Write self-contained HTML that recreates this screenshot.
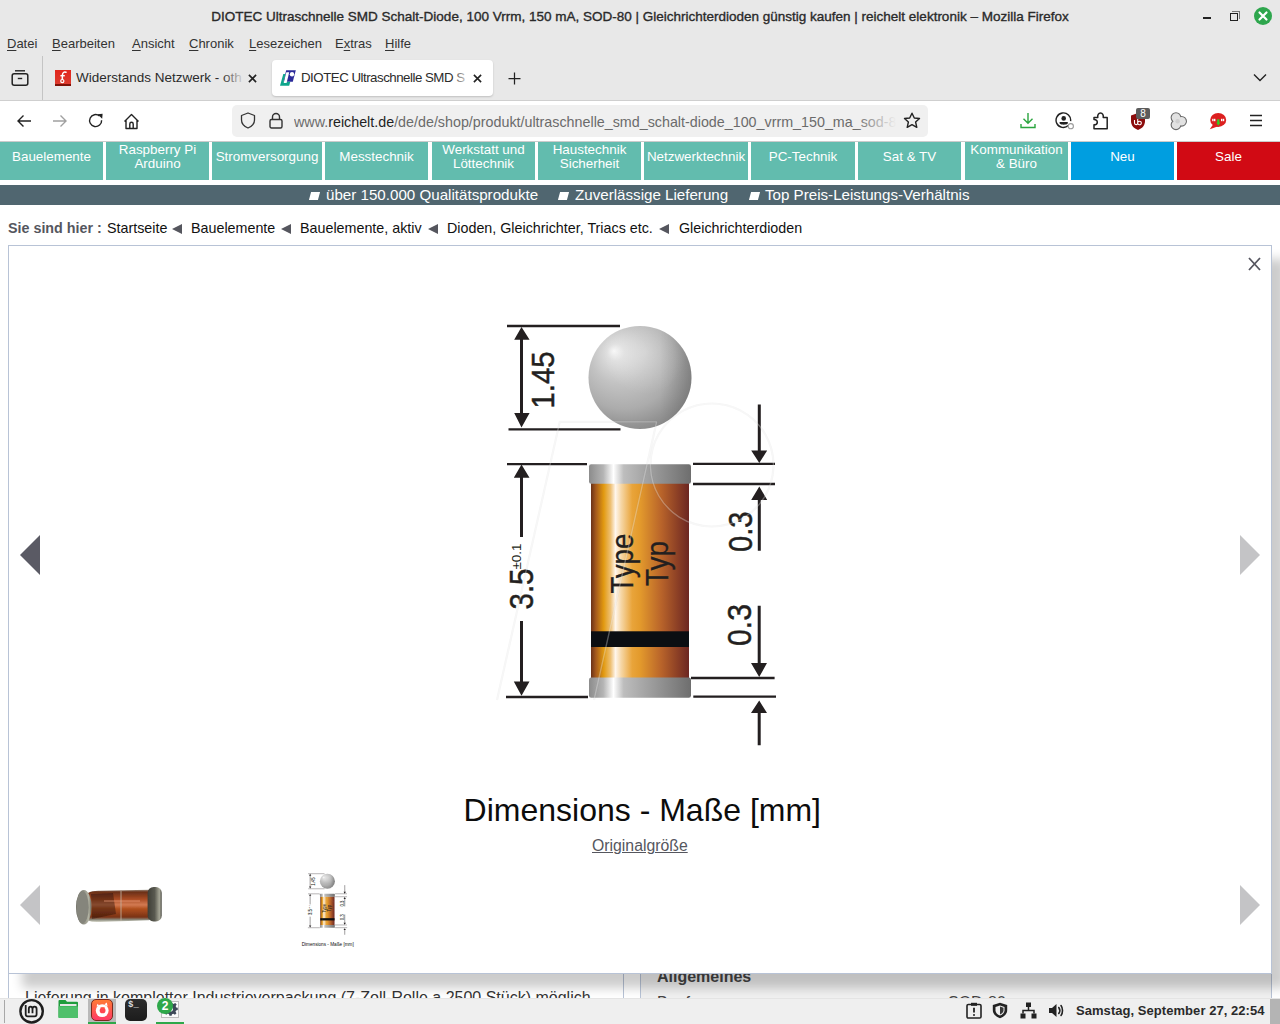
<!DOCTYPE html>
<html><head><meta charset="utf-8">
<style>
*{margin:0;padding:0;box-sizing:border-box}
html,body{width:1280px;height:1024px;overflow:hidden;background:#fff;font-family:"Liberation Sans",sans-serif}
.abs{position:absolute}
#chrome{position:absolute;left:0;top:0;width:1280px;height:141px;background:#e8e8e8}
#title{position:absolute;left:0;top:0;width:1280px;height:32px;text-align:center;font-size:13.5px;line-height:33px;color:#2a2a2a;font-weight:normal;-webkit-text-stroke:0.35px #2a2a2a}
#menu{position:absolute;left:0;top:32px;height:24px;font-size:13px;color:#333}
#menu span{position:absolute;top:4px;white-space:nowrap;line-height:16px}
#menu span u{text-decoration:underline;text-decoration-thickness:1px;text-underline-offset:1.5px}
.tabtxt{font-size:13.3px;color:#2b2b2b;white-space:nowrap;overflow:hidden;line-height:16px}
#navbar{position:absolute;left:0;top:100px;width:1280px;height:41px;background:#fff;border-top:1px solid #cfcfcf}
#page{position:absolute;left:0;top:0;width:1280px;height:1024px;clip-path:inset(141px 0 26px 0)}
.cat{position:absolute;top:142px;height:38px;background:#62bcae;color:#fff;font-size:13.4px;text-align:center;line-height:14px}
.cat span{position:absolute;left:0;right:0;top:8px;white-space:nowrap}
.cat.two span{top:1px}
#usp{position:absolute;left:0;top:185px;width:1280px;height:20px;background:#506670;color:#fff;font-size:15.15px}
#usp span{position:absolute;top:1px;line-height:18px;white-space:nowrap}
#usp .sq{position:absolute;top:7px;width:9px;height:8px;background:#fff;transform:skewX(-15deg)}
#crumbs{position:absolute;left:0;top:219px;font-size:14.3px;color:#111;line-height:18px}
#crumbs span,#crumbs b{position:absolute;top:0;white-space:nowrap}
#crumbs b{color:#55565e}
#crumbs .tri{position:absolute;top:5px;width:0;height:0;border-top:5px solid transparent;border-bottom:5px solid transparent;border-right:10px solid #55565e}
#modal{position:absolute;left:8px;top:245px;width:1264px;height:729px;background:#fff;border:1px solid #b8c3d6}
.arrow-l,.arrow-r{position:absolute;width:0;height:0;border-top:20px solid transparent;border-bottom:20px solid transparent}
.arrow-l{border-right:20px solid #c4c4c6}
.arrow-r{border-left:20px solid #c4c4c6}
#taskbar{position:absolute;left:0;top:998px;width:1280px;height:26px;background:#efefef;box-shadow:inset 0 1px 0 #e4e4e4}
</style></head><body>
<div id="page">
  <div class="cat" style="left:0;width:103px"><span>Bauelemente</span></div>
  <div class="cat two" style="left:106px;width:103px"><span>Raspberry Pi<br>Arduino</span></div>
  <div class="cat" style="left:212px;width:110px"><span>Stromversorgung</span></div>
  <div class="cat" style="left:325px;width:103px"><span>Messtechnik</span></div>
  <div class="cat two" style="left:432px;width:103px"><span>Werkstatt und<br>Löttechnik</span></div>
  <div class="cat two" style="left:538px;width:103px"><span>Haustechnik<br>Sicherheit</span></div>
  <div class="cat" style="left:644px;width:104px"><span>Netzwerktechnik</span></div>
  <div class="cat" style="left:751px;width:104px"><span>PC-Technik</span></div>
  <div class="cat" style="left:858px;width:103px"><span>Sat &amp; TV</span></div>
  <div class="cat two" style="left:965px;width:103px"><span>Kommunikation<br>&amp; Büro</span></div>
  <div class="cat" style="left:1071px;width:103px;background:#009ee0"><span>Neu</span></div>
  <div class="cat" style="left:1177px;width:103px;background:#d10a14"><span>Sale</span></div>
  <div id="usp">
    <i class="sq" style="left:310px"></i><span style="left:326px">über 150.000 Qualitätsprodukte</span>
    <i class="sq" style="left:559px"></i><span style="left:575px">Zuverlässige Lieferung</span>
    <i class="sq" style="left:750px"></i><span style="left:765px">Top Preis-Leistungs-Verhältnis</span>
  </div>
  <div id="crumbs">
    <b style="left:8px">Sie sind hier :</b>
    <span style="left:107px">Startseite</span><i class="tri" style="left:172px"></i>
    <span style="left:191px">Bauelemente</span><i class="tri" style="left:281px"></i>
    <span style="left:300px">Bauelemente, aktiv</span><i class="tri" style="left:428px"></i>
    <span style="left:447px">Dioden, Gleichrichter, Triacs etc.</span><i class="tri" style="left:659px"></i>
    <span style="left:679px">Gleichrichterdioden</span>
  </div>
  <!-- content under modal -->
  <div class="abs" style="left:8px;top:900px;width:616px;height:100px;border-left:1px solid #b8c3d6;border-right:1px solid #b8c3d6"></div>
  <div class="abs" style="left:640px;top:900px;width:632px;height:100px;border-left:1px solid #b8c3d6;border-right:1px solid #b8c3d6;background:#f0f0f0"></div>
  <div class="abs" style="left:25px;top:989px;font-size:16px;color:#333;white-space:nowrap;line-height:18px">Lieferung in kompletter Industrieverpackung (7-Zoll-Rolle a 2500 Stück) möglich</div>
  <div class="abs" style="left:657px;top:967.5px;font-size:16px;font-weight:bold;color:#444;white-space:nowrap;line-height:18px">Allgemeines</div>
  <div class="abs" style="left:657px;top:994px;font-size:16px;color:#444;white-space:nowrap;line-height:18px">Bauform</div>
  <div class="abs" style="left:948px;top:994px;font-size:16px;color:#444;white-space:nowrap;line-height:18px">SOD-80</div>
  <!-- modal shadow -->
  <div class="abs" style="left:8px;top:245px;width:1264px;height:729px;box-shadow:14px 14px 10px rgba(0,0,0,0.2)"></div>
  <div id="modal">
    <svg class="abs" style="left:1239px;top:11px" width="13" height="14" viewBox="0 0 13 14"><path d="M1 1 L12 13 M12 1 L1 13" stroke="#55555f" stroke-width="1.8"/></svg>
    <div class="arrow-l" style="left:11px;top:289px;border-right-color:#5a5a64"></div>
    <div class="arrow-r" style="left:1231px;top:289px"></div>
    <div class="arrow-l" style="left:11px;top:639px"></div>
    <div class="arrow-r" style="left:1231px;top:639px"></div>
    <div class="abs" style="left:583px;top:591px;font-size:15.8px;color:#55565e;text-decoration:underline;white-space:nowrap;line-height:18px">Originalgröße</div>
  </div>
</div>
<svg class="abs" style="left:0;top:0;clip-path:inset(246px 9px 51px 9px)" width="1280" height="1024" viewBox="0 0 1280 1024">
<defs>
  <radialGradient id="gSph" cx="628" cy="362" r="72" fx="614" fy="351" gradientUnits="userSpaceOnUse">
    <stop offset="0" stop-color="#f7f7f7"/>
    <stop offset="0.12" stop-color="#dedede"/>
    <stop offset="0.4" stop-color="#c2c2c2"/>
    <stop offset="0.7" stop-color="#acacac"/>
    <stop offset="0.9" stop-color="#939393"/>
    <stop offset="1" stop-color="#888888"/>
  </radialGradient>
  <radialGradient id="gSph2" cx="645" cy="352" r="42" gradientUnits="userSpaceOnUse">
    <stop offset="0" stop-color="#fff" stop-opacity="0.28"/>
    <stop offset="1" stop-color="#fff" stop-opacity="0"/>
  </radialGradient>
  <linearGradient id="gSph3" x1="660" y1="0" x2="692" y2="0" gradientUnits="userSpaceOnUse">
    <stop offset="0" stop-color="#000" stop-opacity="0"/>
    <stop offset="1" stop-color="#000" stop-opacity="0.12"/>
  </linearGradient>
  <linearGradient id="gBody" x1="591" x2="689" y1="0" y2="0" gradientUnits="userSpaceOnUse">
    <stop offset="0" stop-color="#6a3218"/>
    <stop offset="0.05" stop-color="#a55a1c"/>
    <stop offset="0.13" stop-color="#e29a10"/>
    <stop offset="0.2" stop-color="#eec074"/>
    <stop offset="0.25" stop-color="#fff6ec"/>
    <stop offset="0.31" stop-color="#f6d6a4"/>
    <stop offset="0.42" stop-color="#e9a43a"/>
    <stop offset="0.5" stop-color="#e39a2c"/>
    <stop offset="0.72" stop-color="#b8632a"/>
    <stop offset="1" stop-color="#6c2622"/>
  </linearGradient>
  <linearGradient id="gCap" x1="589" x2="691" y1="0" y2="0" gradientUnits="userSpaceOnUse">
    <stop offset="0" stop-color="#8c8c8c"/>
    <stop offset="0.14" stop-color="#b4b4b4"/>
    <stop offset="0.24" stop-color="#ffffff"/>
    <stop offset="0.34" stop-color="#bdbdbd"/>
    <stop offset="0.6" stop-color="#9e9e9e"/>
    <stop offset="1" stop-color="#6e6e6e"/>
  </linearGradient>
</defs>
<g id="drw" fill="#231f20" stroke="none" font-family="Liberation Sans, sans-serif">
  <!-- sphere dims -->
  <path d="M507 326 H620 M508.5 429.4 H620.5 M507 464.2 H587 M506 697 H588 M693 463.8 H775 M693 484 H775 M691 678 H774.6 M693.3 696.6 H776" stroke="#231f20" stroke-width="2.3" fill="none"/>
  <path d="M521.5 338 V415 M521.5 476 V537 M521.5 621 V683 M759.3 404.4 V452 M759.3 499 V550.8 M759.2 605.8 V664 M759.2 712 V745.2" stroke="#231f20" stroke-width="3" fill="none"/>
  <path d="M521.5 327 L514.2 339.8 H529.6 Z M521.5 427.5 L514.2 413 H529.6 Z M521.5 464.5 L513.8 477.8 H529.5 Z M521.5 695.8 L513.8 681.6 H529.5 Z M759.3 463 L751.2 450.4 H767.2 Z M759.3 486.5 L751.2 500 H767.2 Z M759.2 677 L751 663 H767 Z M759.2 700.4 L751 713 H767 Z"/>
  <text transform="translate(553.8,408.5) rotate(-90)" font-size="32" textLength="57" lengthAdjust="spacingAndGlyphs" stroke="#231f20" stroke-width="0.5">1.45</text>
  <text transform="translate(532.6,609.5) rotate(-90)" font-size="33" textLength="41" lengthAdjust="spacingAndGlyphs" stroke="#231f20" stroke-width="0.5">3.5</text>
  <text transform="translate(521,569.5) rotate(-90)" font-size="13.5" textLength="26" lengthAdjust="spacingAndGlyphs">±0.1</text>
  <text transform="translate(751.8,552) rotate(-90)" font-size="34" textLength="40.5" lengthAdjust="spacingAndGlyphs" stroke="#231f20" stroke-width="0.5">0.3</text>
  <text transform="translate(751.2,646) rotate(-90)" font-size="34" textLength="42" lengthAdjust="spacingAndGlyphs" stroke="#231f20" stroke-width="0.5">0.3</text>
  <!-- sphere -->
  <circle cx="640" cy="377.4" r="51.5" fill="url(#gSph)"/><circle cx="640" cy="377.4" r="51.5" fill="url(#gSph2)"/><circle cx="640" cy="377.4" r="51.5" fill="url(#gSph3)"/>
  <!-- cylinder -->
  <rect x="591" y="482" width="98" height="197" fill="url(#gBody)"/>
  <rect x="591" y="631.3" width="98" height="15.7" fill="#0b0e12"/>
  <rect x="589" y="464.3" width="102" height="19.4" rx="2.2" fill="url(#gCap)"/>
  <rect x="589" y="677.6" width="102" height="20.2" rx="2.2" fill="url(#gCap)"/>
  <text transform="translate(633,593.6) rotate(-90)" font-size="31.5" textLength="60" lengthAdjust="spacingAndGlyphs" stroke="#231f20" stroke-width="0.3">Type</text>
  <text transform="translate(667.8,586) rotate(-90)" font-size="31.5" textLength="45" lengthAdjust="spacingAndGlyphs" stroke="#231f20" stroke-width="0.3">Typ</text>
  <g fill="none" stroke-linejoin="round">
    <path d="M497 700 L559.7 421.9 H656.6 L594 700 M712 403.5 A61.5 61.5 0 1 1 711.9 403.5" stroke="#000" stroke-opacity="0.045" stroke-width="2.2"/>
    <path d="M497 700 L559.7 421.9 H656.6 L594 700 M712 403.5 A61.5 61.5 0 1 1 711.9 403.5" stroke="#fff" stroke-opacity="0.3" stroke-width="1.4"/>
  </g>
  <text x="463.6" y="820.8" font-size="30.5" textLength="357.4" lengthAdjust="spacingAndGlyphs" fill="#0c0c0c">Dimensions - Maße [mm]</text>
</g>
<use href="#drw" transform="translate(234.2,826.25) scale(0.1456)"/>
</svg>
<svg class="abs" style="left:70px;top:880px" width="100" height="50" viewBox="70 880 100 50">
<defs>
  <linearGradient id="pBody" x1="0" y1="889" x2="0" y2="922" gradientUnits="userSpaceOnUse">
    <stop offset="0" stop-color="#a8a89a"/>
    <stop offset="0.09" stop-color="#6a3018"/>
    <stop offset="0.3" stop-color="#a84a22"/>
    <stop offset="0.48" stop-color="#d27a52"/>
    <stop offset="0.6" stop-color="#b0501e"/>
    <stop offset="0.85" stop-color="#7a3216"/>
    <stop offset="0.93" stop-color="#8a8a7c"/>
    <stop offset="1" stop-color="#d8d8cc"/>
  </linearGradient>
  <linearGradient id="pCapL" x1="76" y1="0" x2="92" y2="0" gradientUnits="userSpaceOnUse">
    <stop offset="0" stop-color="#66665c"/>
    <stop offset="0.45" stop-color="#8e8e84"/>
    <stop offset="0.8" stop-color="#b4b4a4"/>
    <stop offset="1" stop-color="#5a5a50"/>
  </linearGradient>
  <linearGradient id="pCapR" x1="147.5" y1="0" x2="162" y2="0" gradientUnits="userSpaceOnUse">
    <stop offset="0" stop-color="#3e3e36"/>
    <stop offset="0.5" stop-color="#5a5a50"/>
    <stop offset="0.82" stop-color="#a6a696"/>
    <stop offset="1" stop-color="#4e4e46"/>
  </linearGradient>
  <filter id="pBlur" x="-10%" y="-10%" width="120%" height="120%"><feGaussianBlur stdDeviation="0.7"/></filter>
</defs>
<g filter="url(#pBlur)">
  <path d="M88 893 Q92 890.5 100 890.8 L149 889.8 V920.2 L100 922 Q92 922.5 88 920.5 Z" fill="url(#pBody)"/>
  <path d="M91 894 L113 893 L116 914 L92 919 Z" fill="#2a1208" opacity="0.45"/>
  <path d="M121 891 V921" stroke="#c0b0a0" stroke-width="1.4" opacity="0.6"/>
  <path d="M104 901 H140" stroke="#f0a080" stroke-width="1.4" opacity="0.45"/>
  <rect x="147.6" y="887" width="14.2" height="34.6" rx="6" fill="url(#pCapR)"/>
  <ellipse cx="83.8" cy="907.3" rx="7.8" ry="17.3" fill="url(#pCapL)"/>
  <ellipse cx="82.6" cy="907.3" rx="6.2" ry="16" fill="#85857b"/>
</g>
</svg>
<div id="chrome">
  <div id="title">DIOTEC Ultraschnelle SMD Schalt-Diode, 100 Vrrm, 150 mA, SOD-80 | Gleichrichterdioden günstig kaufen | reichelt elektronik – Mozilla Firefox</div>
  <!-- window controls -->
  <div class="abs" style="left:1203px;top:17px;width:8px;height:2px;background:#222"></div>
  <div class="abs" style="left:1232px;top:11px;width:8px;height:8px;border-top:1px solid #777;border-right:1px solid #777"></div>
  <div class="abs" style="left:1230px;top:13px;width:8px;height:8px;border:1.5px solid #222;background:#e8e8e8"></div>
  <div class="abs" style="left:1254px;top:7px;width:18px;height:18px;border-radius:50%;background:#2ea64d"></div>
  <svg class="abs" style="left:1254px;top:7px" width="18" height="18"><path d="M5.5 5.5 L12.5 12.5 M12.5 5.5 L5.5 12.5" stroke="#fff" stroke-width="2.2" stroke-linecap="round"/></svg>
  <div id="menu">
    <span style="left:7px"><u>D</u>atei</span>
    <span style="left:52px"><u>B</u>earbeiten</span>
    <span style="left:132px"><u>A</u>nsicht</span>
    <span style="left:189px"><u>C</u>hronik</span>
    <span style="left:249px"><u>L</u>esezeichen</span>
    <span style="left:335px">E<u>x</u>tras</span>
    <span style="left:385px"><u>H</u>ilfe</span>
  </div>
  <!-- tab bar -->
  <svg class="abs" style="left:11px;top:69px" width="18" height="18" viewBox="0 0 18 18"><path d="M4 1.8 H14" stroke="#222" stroke-width="1.4" fill="none"/><rect x="1.2" y="4.8" width="15.6" height="11.5" rx="2" stroke="#222" stroke-width="1.5" fill="none"/><path d="M6.8 9.5 H11.2" stroke="#222" stroke-width="1.4"/></svg>
  <div class="abs" style="left:42px;top:56px;width:1px;height:44px;background:#c4c4c4"></div>
  <div class="abs" style="left:55px;top:70px;width:16px;height:16px;background:linear-gradient(#e2261c,#dc3a2e 85%,#7e1208 88%)"></div><svg class="abs" style="left:55px;top:70px" width="16" height="16" viewBox="0 0 16 16"><path d="M11 2.3 C9 1.6 7.6 2.6 7.4 5 L7.3 10" stroke="#fff" stroke-width="1.5" fill="none" stroke-linecap="round"/><path d="M5.4 5.7 H9.8" stroke="#fff" stroke-width="1.4"/><circle cx="7.3" cy="11.1" r="1.6" fill="#d84030" stroke="#fff" stroke-width="1.2"/></svg>
  <div class="abs tabtxt" style="left:76px;top:70px;width:170px;font-size:13.5px">Widerstands Netzwerk - oth</div>
  <div class="abs" style="left:222px;top:66px;width:24px;height:24px;background:linear-gradient(90deg,rgba(232,232,232,0),#e8e8e8 95%)"></div>
  <svg class="abs" style="left:248px;top:74px" width="9" height="9"><path d="M0.9 0.9 L8.1 8.1 M8.1 0.9 L0.9 8.1" stroke="#222" stroke-width="1.6"/></svg>
  <div class="abs" style="left:272px;top:60px;width:221px;height:36px;background:#fff;border-radius:4px;box-shadow:0 1px 2px rgba(0,0,0,0.18)"></div>
  <svg class="abs" style="left:280px;top:70px" width="16" height="16" viewBox="0 0 16 16"><path d="M6.2 0.2 H15.8 L12.8 11.8 H3.2 Z" fill="#2c2a9a"/><path d="M3.3 4 H5.6 L3.4 11.8 H10.3 L9.2 15.7 H0 Z" fill="#0fa58c"/><path d="M6.3 2.3 H9.2 L6.6 12.9 H3.7 Z" fill="#fff"/><circle cx="12" cy="4.3" r="2.2" fill="#fff"/></svg>
  <div class="abs tabtxt" style="left:301px;top:70px;width:169px;letter-spacing:-0.5px">DIOTEC Ultraschnelle SMD S</div>
  <div class="abs" style="left:452px;top:66px;width:19px;height:24px;background:linear-gradient(90deg,rgba(255,255,255,0),#fff 95%)"></div>
  <svg class="abs" style="left:473px;top:74px" width="9" height="9"><path d="M0.9 0.9 L8.1 8.1 M8.1 0.9 L0.9 8.1" stroke="#222" stroke-width="1.6"/></svg>
  <svg class="abs" style="left:508px;top:72px" width="13" height="13"><path d="M6.5 0.5 V12.5 M0.5 6.5 H12.5" stroke="#222" stroke-width="1.25"/></svg>
  <svg class="abs" style="left:1253px;top:73px" width="14" height="10"><path d="M1 1.5 L7 7.5 L13 1.5" stroke="#222" stroke-width="1.4" fill="none"/></svg>
  <!-- nav toolbar -->
  <div id="navbar"></div>
  <div class="abs" style="left:0;top:141px;width:1280px;height:1px;background:#cbcbcb"></div>
  <svg class="abs" style="left:16px;top:113px" width="16" height="16" viewBox="0 0 16 16"><path d="M15 8 H2 M7.5 2.5 L2 8 L7.5 13.5" stroke="#222" stroke-width="1.4" fill="none"/></svg>
  <svg class="abs" style="left:52px;top:113px" width="16" height="16" viewBox="0 0 16 16"><path d="M1 8 H14 M8.5 2.5 L14 8 L8.5 13.5" stroke="#a0a0a0" stroke-width="1.4" fill="none"/></svg>
  <svg class="abs" style="left:88px;top:113px" width="16" height="16" viewBox="0 0 16 16"><path d="M13.6 7.2 A6 6 0 1 1 11.5 3" stroke="#222" stroke-width="1.4" fill="none"/><path d="M9.5 1.2 L14.6 0.8 L14.2 5.8 Z" fill="#222"/></svg>
  <svg class="abs" style="left:123px;top:113px" width="17" height="17" viewBox="0 0 17 17"><path d="M1.5 8.5 L8.5 1.5 L15.5 8.5 M3 7 V15.5 H14 V7 M6.8 15.5 V11 A1.7 1.7 0 0 1 10.2 11 V15.5" stroke="#222" stroke-width="1.4" fill="none" stroke-linejoin="round"/></svg>
  <div class="abs" style="left:232px;top:105px;width:696px;height:32px;background:#f0f0f0;border-radius:5px"></div>
  <svg class="abs" style="left:240px;top:112px" width="16" height="17" viewBox="0 0 16 17"><path d="M8 1 L14.5 3.5 V8 C14.5 12 11.5 14.5 8 16 C4.5 14.5 1.5 12 1.5 8 V3.5 Z" stroke="#333" stroke-width="1.3" fill="none" stroke-linejoin="round"/></svg>
  <svg class="abs" style="left:269px;top:112px" width="14" height="17" viewBox="0 0 14 17"><path d="M3.5 7.5 V5 A3.5 3.5 0 0 1 10.5 5 V7.5" stroke="#333" stroke-width="1.4" fill="none"/><rect x="1" y="7.5" width="12" height="8.5" rx="1.5" stroke="#333" stroke-width="1.4" fill="none"/></svg>
  <div class="abs" id="url" style="left:294px;top:112px;width:604px;white-space:nowrap;overflow:hidden;font-size:14.3px;color:#6b6b6b;line-height:20px">www.<span style="color:#1f1f1f">reichelt.de</span>/de/de/shop/produkt/ultraschnelle_smd_schalt-diode_100_vrrm_150_ma_sod-8</div>
  <div class="abs" style="left:856px;top:108px;width:44px;height:26px;background:linear-gradient(90deg,rgba(240,240,240,0),#f0f0f0 92%)"></div>
  <svg class="abs" style="left:903px;top:112px" width="18" height="17" viewBox="0 0 18 17"><path d="M9 1.2 L11.3 6 L16.5 6.5 L12.6 10 L13.8 15.3 L9 12.6 L4.2 15.3 L5.4 10 L1.5 6.5 L6.7 6 Z" stroke="#222" stroke-width="1.4" fill="none" stroke-linejoin="round"/></svg>
  <!-- right toolbar icons -->
  <svg class="abs" style="left:1020px;top:112px" width="16" height="17" viewBox="0 0 16 17"><path d="M8 1 V11 M3.5 6.8 L8 11.3 L12.5 6.8 M1 12 V15.5 H15 V12" stroke="#2aa53e" stroke-width="1.4" fill="none"/></svg>
  <svg class="abs" style="left:1055px;top:112px" width="20" height="18" viewBox="0 0 20 18"><path d="M13.3 13.6 A7.3 7.3 0 1 1 15.6 9.2" stroke="#222" stroke-width="1.4" fill="none"/><circle cx="8.7" cy="6.4" r="2.3" fill="#222"/><path d="M4.6 10 H12.8 V11.6 C11.5 13.2 6 13.2 4.6 11.6 Z" fill="#222"/><circle cx="15.8" cy="14.2" r="2.6" fill="#fff" stroke="#9a9a9a" stroke-width="1.1"/></svg>
  <svg class="abs" style="left:1093px;top:112px" width="16" height="18" viewBox="0 0 16 18"><path d="M1 5.5 H4.8 C4.3 3 5.5 1 7.5 1 C9.5 1 10.7 3 10.2 5.5 H14.2 V16.8 H1 V12.8 C3.3 12.8 4.3 11.8 4.3 10.2 C4.3 8.6 3.3 7.6 1 7.6 Z" stroke="#222" stroke-width="1.5" fill="none" stroke-linejoin="round"/></svg>
  <svg class="abs" style="left:1130px;top:112px" width="16" height="19" viewBox="0 0 16 19"><path d="M8 1 L15 3.5 V9 C15 13.5 12 16.5 8 18 C4 16.5 1 13.5 1 9 V3.5 Z" fill="#8c0c0c"/><path d="M4.5 8 V11 A1.6 1.6 0 0 0 7.7 11 V8 M7.7 7 V11 A1.8 1.8 0 0 0 11.3 11 A1.8 1.8 0 0 0 7.7 11" stroke="#fff" stroke-width="1.1" fill="none"/></svg>
  <div class="abs" style="left:1136px;top:108px;width:14px;height:11px;background:#5c5c5c;border-radius:2px;color:#fff;font-size:10px;line-height:11px;text-align:center">8</div>
  <svg class="abs" style="left:1169px;top:112px" width="19" height="19" viewBox="0 0 19 19"><g stroke="#6a6a6a" stroke-width="2.2"><circle cx="7" cy="5.6" r="4.3"/><circle cx="12.6" cy="9.3" r="4.3"/><circle cx="7" cy="12.8" r="4.3"/></g><g fill="#e2e2e2"><circle cx="7" cy="5.6" r="4.3"/><circle cx="12.6" cy="9.3" r="4.3"/><circle cx="7" cy="12.8" r="4.3"/></g><circle cx="8.6" cy="9.2" r="2.2" fill="#cfcfcf"/></svg>
  <svg class="abs" style="left:1209px;top:112px" width="18" height="20" viewBox="0 0 18 20"><ellipse cx="9.2" cy="7.9" rx="8" ry="7" fill="#dc1f1f"/><path d="M4 12.5 L0.8 17.2 L10 14 Z" fill="#dc1f1f"/><g fill="#fff"><rect x="3.2" y="6.8" width="1.4" height="2.4"/><rect x="5" y="6.8" width="1.4" height="2.4"/><rect x="12" y="6.8" width="1.4" height="2.4"/><rect x="13.8" y="6.8" width="1.4" height="2.4"/></g><path d="M9.3 7.3 V11.5" stroke="#33cc22" stroke-width="2.2"/><path d="M7.3 10.5 L9.3 13.7 L11.3 10.5 Z" fill="#33cc22"/></svg>
  <svg class="abs" style="left:1249px;top:114px" width="14" height="13" viewBox="0 0 14 13"><path d="M1 1.5 H13 M1 6.5 H13 M1 11.5 H13" stroke="#222" stroke-width="1.4"/></svg>
</div>
<div id="taskbar">
  <div class="abs" style="left:4px;top:2px;width:1px;height:23px;background:#a8a8a8"></div>
  <svg class="abs" style="left:18px;top:-1px" width="28" height="28" viewBox="0 0 28 28"><circle cx="13.6" cy="14.3" r="11.2" stroke="#1e1e1e" stroke-width="2.4" fill="none"/><path d="M7.7 8.1 V17.2 Q7.7 19.3 9.8 19.3 H16.5 Q18.6 19.3 18.6 17.2 V12 Q18.6 9.6 16.55 9.6 Q14.5 9.6 14.5 12 V16.2 M14.5 12 Q14.5 9.6 12.65 9.6 Q10.8 9.6 10.8 12 V16.2" stroke="#1e1e1e" stroke-width="1.8" fill="none"/></svg>
  <svg class="abs" style="left:58px;top:2px" width="20" height="19" viewBox="0 0 20 19"><path d="M0.5 1 Q0.5 0 1.5 0 H7.5 L9 1.8 H19 Q20 1.8 20 2.8 V17 Q20 18 19 18 H1.5 Q0.5 18 0.5 17 Z" fill="#1f9c3c"/><rect x="2" y="4" width="16.5" height="2" fill="#e6e6e6"/><rect x="0.5" y="6.3" width="19.5" height="11.7" rx="0.8" fill="#4fc06b"/></svg>
  <div class="abs" style="left:88px;top:1px;width:28px;height:23px;background:#b9b9b9"></div>
  <div class="abs" style="left:88px;top:24px;width:28px;height:3px;background:#2ea84a"></div>
  <div class="abs" style="left:91px;top:1px;width:22px;height:22px;border-radius:5px;background:linear-gradient(#ff7b35,#ff3a66);border:1px solid #7a2a1c"></div>
  <svg class="abs" style="left:94px;top:4px" width="16" height="16" viewBox="0 0 16 16"><path d="M2.5 4.5 L3.5 1.8 L5.2 3.6 Z M10.5 2.2 L12.8 0.4 L13.6 4.4 Z" fill="#fff"/><circle cx="8.2" cy="8.6" r="6.4" fill="#fff"/><circle cx="8.6" cy="8.4" r="2.9" fill="#ff4550"/><path d="M5.8 5.2 H11 L9.6 7 Z" fill="#ff5a40"/></svg>
  <div class="abs" style="left:125px;top:1px;width:22px;height:22px;border-radius:5px;background:linear-gradient(#2e2e2e,#1c1c1c)"></div>
  <div class="abs" style="left:128px;top:2px;font:bold 9px 'Liberation Mono',monospace;color:#ddd;line-height:10px">$_</div>
  <div class="abs" style="left:161px;top:3px;width:18px;height:17px;background:#fafafa;border:1px solid #bdbdbd"></div>
  <svg class="abs" style="left:163px;top:4px" width="15" height="15" viewBox="0 0 15 15"><path d="M6.3 1 H8.7 L9.1 3 L10.6 3.7 L12.3 2.5 L13.9 4.2 L12.8 5.9 L13.4 7.3 L15 7.7 V10 L13.2 10.4 L12.6 11.9 L13.7 13.5 L12 15 L10.4 13.9 L8.9 14.6 L8.6 16 H6.2 L5.9 14.4 L4.4 13.8 L2.8 14.9 L1.1 13.3 L2.2 11.6 L1.6 10.2 L0 9.9 V7.5 L1.7 7.1 L2.3 5.6 L1.3 4 L3 2.4 L4.6 3.5 L6 2.9 Z" fill="#3d4858" transform="translate(0.5,-1.5) scale(0.95)"/><circle cx="7.6" cy="7.3" r="2.4" fill="#fafafa"/></svg>
  <div class="abs" style="left:157px;top:0px;width:16px;height:16px;border-radius:50%;background:#2ea84a;color:#fff;font:bold 12px 'Liberation Sans',sans-serif;text-align:center;line-height:16px">2</div>
  <div class="abs" style="left:156px;top:24px;width:28px;height:3px;background:#2ea84a"></div>
  <!-- tray -->
  <svg class="abs" style="left:966px;top:4px" width="16" height="17" viewBox="0 0 16 17"><rect x="1" y="2.5" width="14" height="13.5" rx="1.3" fill="none" stroke="#222" stroke-width="1.6"/><rect x="5" y="0.8" width="6" height="3" fill="#222"/><path d="M8 5.8 V10.5" stroke="#222" stroke-width="1.8"/><circle cx="8" cy="13" r="1" fill="#222"/></svg>
  <svg class="abs" style="left:992px;top:4px" width="16" height="17" viewBox="0 0 16 17"><path d="M8 0.8 L15.2 3 V8 C15.2 12 12 14.8 8 16.2 C4 14.8 0.8 12 0.8 8 V3 Z" fill="#222"/><path d="M8 3.5 L12.5 5 V8.3 C12.5 10.8 10.6 12.6 8 13.6 C5.4 12.6 3.5 10.8 3.5 8.3 V5 Z" fill="#efefef"/><path d="M8 4.5 L11.5 5.7 V8.3 C11.5 10.3 10 11.7 8 12.5 Z" fill="#222" opacity="0.9"/></svg>
  <svg class="abs" style="left:1020px;top:4px" width="17" height="17" viewBox="0 0 17 17"><rect x="6" y="0.5" width="5" height="4.5" fill="#222"/><rect x="0.5" y="11.5" width="5" height="5" fill="#222"/><rect x="11.5" y="11.5" width="5" height="5" fill="#222"/><path d="M8.5 5 V8.5 M3 11.5 V8.5 H14 V11.5" stroke="#222" stroke-width="1.5" fill="none"/></svg>
  <svg class="abs" style="left:1048px;top:4px" width="17" height="17" viewBox="0 0 17 17"><path d="M1 6 H4 L8.5 2 V15 L4 11 H1 Z" fill="#222"/><path d="M10.8 5.5 C12 7.2 12 9.8 10.8 11.5 M13 3.5 C15 6 15 11 13 13.5" stroke="#222" stroke-width="1.6" fill="none" stroke-linecap="round"/></svg>
  <div class="abs" style="left:1076px;top:5px;font-size:13px;font-weight:bold;color:#2a2a2a;white-space:nowrap;line-height:16px;letter-spacing:0.05px">Samstag, September 27, 22:54</div>
  <div class="abs" style="left:1270px;top:1px;width:10px;height:26px;background:#b4b4b4"></div>
</div>
</body></html>
